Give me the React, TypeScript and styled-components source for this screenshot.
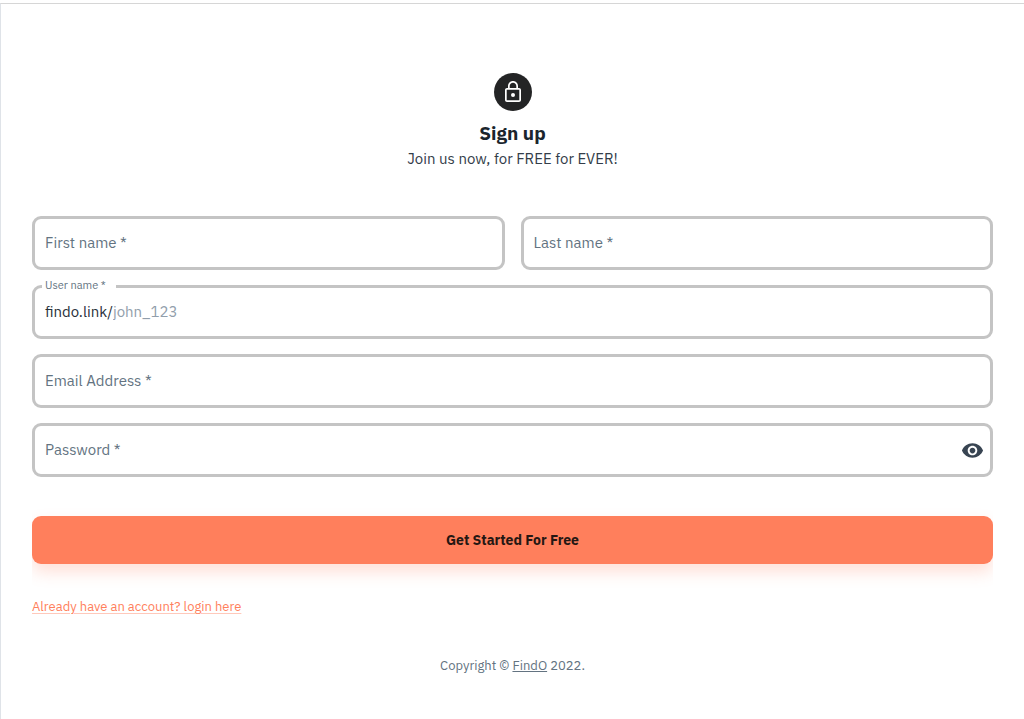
import React, { useState } from "react";
import styled, { createGlobalStyle } from "styled-components";

const GlobalStyle = createGlobalStyle`
  *, *::before, *::after { box-sizing: border-box; }
  html { background: #ffffff; }
  body {
    margin: 0;
    color: #212b36;
    font-family: "IBM Plex Sans", Roboto, "Liberation Sans", sans-serif;
    font-size: 15px;
    line-height: 24px;
  }
`;

const Page = styled.div`
  padding-top: 3px;
`;

const Panel = styled.main`
  display: flex;
  flex-direction: column;
  min-height: calc(100vh - 3px);
  padding: 69px 31px 40px;
  border-top: 1px solid #d6d6d6;
  border-left: 1px solid #dfe3e8;
`;

const Header = styled.header`
  display: flex;
  flex-direction: column;
  align-items: center;
  margin-bottom: 45px;
  text-align: center;
`;

const Avatar = styled.div`
  display: flex;
  align-items: center;
  justify-content: center;
  width: 38px;
  height: 38px;
  margin-bottom: 8px;
  border-radius: 50%;
  background: #232425;
  color: #ffffff;
`;

const Title = styled.h1`
  margin: 0;
  color: #1a252d;
  font-size: 19px;
  font-weight: 700;
  line-height: 28px;
`;

const Subtitle = styled.p`
  margin: 0;
  color: #333d49;
`;

const Form = styled.form`
  display: flex;
  flex-direction: column;
`;

const Fields = styled.div`
  display: grid;
  grid-template-columns: 1fr 1fr;
  gap: 15px 16px;
`;

const Field = styled.div<{ $wide?: boolean }>`
  position: relative;
  display: flex;
  align-items: center;
  grid-column: ${({ $wide }) => ($wide ? "1 / -1" : "auto")};
  height: 54px;
  padding: 0 6px 0 10px;
  border: 3px solid #c4c4c4;
  border-radius: 9px;

  &:focus-within { border-color: #ff7f5c; }
`;

const Label = styled.label<{ $raised: boolean }>`
  position: absolute;
  top: ${({ $raised }) => ($raised ? "-11px" : "12px")};
  left: ${({ $raised }) => ($raised ? "7px" : "10px")};
  padding: ${({ $raised }) => ($raised ? "0 10px 0 3px" : "0")};
  background: ${({ $raised }) => ($raised ? "#ffffff" : "transparent")};
  color: #637381;
  font-size: ${({ $raised }) => ($raised ? "11px" : "15px")};
  line-height: ${({ $raised }) => ($raised ? "16px" : "24px")};
  pointer-events: none;
`;

const Prefix = styled.span`
  color: #29313a;
`;

const Input = styled.input`
  flex: 1;
  min-width: 0;
  padding: 0;
  border: 0;
  outline: 0;
  background: transparent;
  color: #212b36;
  font: inherit;

  &::placeholder { color: #919eab; opacity: 1; }
`;

const IconButton = styled.button`
  display: flex;
  padding: 0;
  border: 0;
  background: transparent;
  color: #384452;
  cursor: pointer;
`;

const ButtonArea = styled.div`
  margin-top: 27px;
  padding: 12px 0 28px;
  overflow: hidden;
`;

const SubmitButton = styled.button`
  display: block;
  width: 100%;
  height: 48px;
  border: 0;
  border-radius: 9px;
  background: #ff7f5c;
  box-shadow: 0 8px 16px rgba(255, 127, 92, 0.24);
  color: #251713;
  font: inherit;
  font-size: 14px;
  font-weight: 700;
  cursor: pointer;
`;

const LoginLink = styled.a`
  align-self: flex-start;
  margin-top: 3px;
  color: #ff7f5c;
  font-size: 13px;
  text-decoration-color: #ffc9bb;
  text-underline-offset: 2px;
`;

const Footer = styled.footer`
  margin-top: 35px;
  color: #637381;
  font-size: 13px;
  text-align: center;

  a { color: inherit; }
`;

const LockIcon = () => (
  <svg width="24" height="24" viewBox="0 0 24 24" fill="currentColor" aria-hidden="true">
    <path d="M18 8h-1V6c0-2.76-2.24-5-5-5S7 3.24 7 6v2H6c-1.1 0-2 .9-2 2v10c0 1.1.9 2 2 2h12c1.1 0 2-.9 2-2V10c0-1.1-.9-2-2-2zM8.7 6c0-1.82 1.48-3.3 3.3-3.3s3.3 1.48 3.3 3.3v2H8.7V6zM18.3 20.3H5.7V9.7h12.6v10.6z" />
    <circle cx="12" cy="15" r="2" />
  </svg>
);

const EyeIcon = () => (
  <svg width="23" height="23" viewBox="0 0 24 24" fill="currentColor" aria-hidden="true">
    <path d="M12 4.5C7 4.5 2.73 7.61 1 12c1.73 4.39 6 7.5 11 7.5s9.27-3.11 11-7.5c-1.73-4.39-6-7.5-11-7.5zM12 17c-2.76 0-5-2.24-5-5s2.24-5 5-5 5 2.24 5 5-2.24 5-5 5zm0-8c-1.66 0-3 1.34-3 3s1.34 3 3 3 3-1.34 3-3-1.34-3-3-3z" />
  </svg>
);

type TextFieldProps = {
  id: string;
  label: string;
  type?: string;
  wide?: boolean;
  prefix?: string;
  placeholder?: string;
  children?: React.ReactNode;
};

const TextField = ({ id, label, type = "text", wide, prefix, placeholder, children }: TextFieldProps) => {
  const [value, setValue] = useState("");
  const [focused, setFocused] = useState(false);
  const raised = Boolean(prefix) || focused || value !== "";

  return (
    <Field $wide={wide}>
      <Label htmlFor={id} $raised={raised}>{label} *</Label>
      {prefix && <Prefix>{prefix}</Prefix>}
      <Input
        id={id}
        name={id}
        type={type}
        placeholder={placeholder}
        value={value}
        onChange={(e) => setValue(e.target.value)}
        onFocus={() => setFocused(true)}
        onBlur={() => setFocused(false)}
        required
      />
      {children}
    </Field>
  );
};

export default function App() {
  const [showPassword, setShowPassword] = useState(false);

  return (
    <Page>
      <GlobalStyle />
      <Panel>
        <Header>
          <Avatar><LockIcon /></Avatar>
          <Title>Sign up</Title>
          <Subtitle>Join us now, for FREE for EVER!</Subtitle>
        </Header>
        <Form onSubmit={(e) => e.preventDefault()}>
          <Fields>
            <TextField id="firstName" label="First name" />
            <TextField id="lastName" label="Last name" />
            <TextField id="userName" label="User name" prefix="findo.link/" placeholder="john_123" wide />
            <TextField id="email" label="Email Address" type="email" wide />
            <TextField id="password" label="Password" type={showPassword ? "text" : "password"} wide>
              <IconButton
                type="button"
                aria-label="Toggle password visibility"
                onClick={() => setShowPassword(!showPassword)}
              >
                <EyeIcon />
              </IconButton>
            </TextField>
          </Fields>
          <ButtonArea>
            <SubmitButton type="submit">Get Started For Free</SubmitButton>
          </ButtonArea>
          <LoginLink href="#login">Already have an account? login here</LoginLink>
        </Form>
        <Footer>Copyright © <a href="#findo">FindO</a> 2022.</Footer>
      </Panel>
    </Page>
  );
}
